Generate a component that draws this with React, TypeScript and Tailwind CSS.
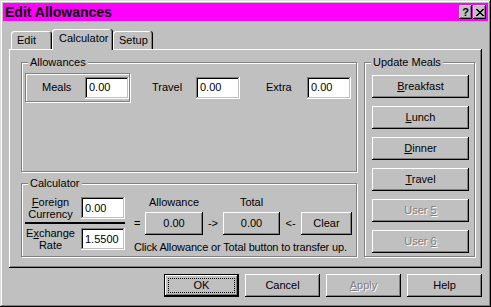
import React from "react";

const raised =
  "bg-[#c0c0c0] shadow-[inset_-1px_-1px_0_#000,inset_1px_1px_0_#fff,inset_-2px_-2px_0_#808080]";
const sunken =
  "bg-white shadow-[inset_-1px_-1px_0_#fff,inset_1px_1px_0_#808080,inset_-2px_-2px_0_#c0c0c0,inset_2px_2px_0_#000]";
const etched = "border border-[#808080] shadow-[inset_1px_1px_0_#fff,1px_1px_0_#fff]";
const disabled = "text-[#808080] [text-shadow:1px_1px_0_#fff]";

function Group({
  label,
  className,
  children,
}: {
  label: string;
  className: string;
  children?: React.ReactNode;
}) {
  return (
    <div className={`relative ${etched} ${className}`}>
      <span className="absolute left-[6px] top-[-7px] bg-[#c0c0c0] px-[2px] leading-[13px] whitespace-nowrap">
        {label}
      </span>
      {children}
    </div>
  );
}

function Field({ value, className }: { value: string; className: string }) {
  return (
    <div className={`${sunken} ${className} flex items-center pl-[4px] leading-[13px]`}>
      {value}
    </div>
  );
}

function Btn({
  children,
  className,
}: {
  children: React.ReactNode;
  className: string;
}) {
  return (
    <div className={`${raised} ${className} flex items-center justify-center leading-[13px] whitespace-nowrap`}>
      {children}
    </div>
  );
}

export default function App() {
  return (
    <div className="w-[491px] h-[307px] bg-[#c0c0c0] p-[3px] text-[11px] leading-[13px] text-black font-['Liberation_Sans',Arial,sans-serif] flex flex-col shadow-[inset_-1px_-1px_0_#000,inset_1px_1px_0_#dfdfdf,inset_-2px_-2px_0_#808080,inset_2px_2px_0_#fff]">
      {/* Title bar */}
      <div className="h-[18px] bg-[#ff00ff] flex items-center justify-between">
        <span className="pl-[2px] text-[14px] font-bold leading-[18px]">Edit Allowances</span>
        <div className="flex gap-[1px] mr-[2px]">
          <div className={`${raised} w-[13px] h-[14px] flex items-center justify-center text-[11px] font-bold leading-[11px]`}>
            ?
          </div>
          <div className={`${raised} w-[13px] h-[14px] flex items-center justify-center`}>
            <svg width="8" height="7" viewBox="0 0 8 7" shapeRendering="crispEdges">
              <rect x="0" y="0" width="2" height="1" fill="#000" />
              <rect x="6" y="0" width="2" height="1" fill="#000" />
              <rect x="1" y="1" width="2" height="1" fill="#000" />
              <rect x="5" y="1" width="2" height="1" fill="#000" />
              <rect x="2" y="2" width="4" height="1" fill="#000" />
              <rect x="3" y="3" width="2" height="1" fill="#000" />
              <rect x="2" y="4" width="4" height="1" fill="#000" />
              <rect x="1" y="5" width="2" height="1" fill="#000" />
              <rect x="5" y="5" width="2" height="1" fill="#000" />
              <rect x="0" y="6" width="2" height="1" fill="#000" />
              <rect x="6" y="6" width="2" height="1" fill="#000" />
            </svg>
          </div>
        </div>
      </div>

      <div className="mt-[8px] px-[6px] flex flex-col">
        {/* Tabs */}
        <div className="h-[20px] flex items-end pl-[2px]">
          <div className="w-[41px] h-[18px] pl-[6px] pt-[3px] bg-[#c0c0c0] rounded-t-[3px] shadow-[inset_1px_1px_0_#fff,inset_-1px_0_0_#000,inset_-2px_0_0_#808080]">
            Edit
          </div>
          <div className="relative z-10 -mb-[1px] w-[61px] h-[21px] pl-[7px] pt-[3px] bg-[#c0c0c0] rounded-t-[3px] shadow-[inset_-1px_0_0_#000,inset_1px_1px_0_#fff,inset_-2px_0_0_#808080]">
            Calculator
          </div>
          <div className="w-[40px] h-[18px] pl-[6px] pt-[3px] bg-[#c0c0c0] rounded-t-[3px] shadow-[inset_-1px_0_0_#000,inset_1px_1px_0_#fff,inset_-2px_0_0_#808080]">
            Setup
          </div>
        </div>

        {/* Panel */}
        <div className="w-[473px] h-[219px] flex gap-[7px] pl-[12px] pt-[13px] shadow-[inset_-1px_-1px_0_#000,inset_1px_1px_0_#fff,inset_-2px_-2px_0_#808080]">
          <div className="w-[336px] flex flex-col gap-[11px]">
            <Group label="Allowances" className="w-[336px] h-[110px] flex items-start pl-[3px] pt-[10px]">
              <div className="flex items-center">
                <div className={`${etched} w-[105px] h-[29px] flex items-center pl-[16px]`}>
                  <span className="w-[43px]">Meals</span>
                  <Field value="0.00" className="w-[44px] h-[22px]" />
                </div>
                <span className="ml-[22px] w-[44px]">Travel</span>
                <Field value="0.00" className="w-[44px] h-[22px]" />
                <span className="ml-[26px] w-[41px]">Extra</span>
                <Field value="0.00" className="w-[44px] h-[22px]" />
              </div>
            </Group>

            <Group label="Calculator" className="w-[336px] h-[74px] flex pl-[3px]">
              {/* left fraction block */}
              <div className="w-[100px] pt-[13px] flex flex-col">
                <div className="h-[22px] flex items-center">
                  <div className="w-[51px] text-center leading-[12px]">
                    <div>
                      <u>F</u>oreign
                    </div>
                    <div>Currency</div>
                  </div>
                  <Field value="0.00" className="ml-[5px] w-[44px] h-[22px]" />
                </div>
                <div className="mt-[3px] h-[2px] bg-black" />
                <div className="mt-[4px] h-[22px] flex items-center">
                  <div className="w-[51px] text-center leading-[12px]">
                    <div>
                      E<u>x</u>change
                    </div>
                    <div>Rate</div>
                  </div>
                  <Field value="1.5500" className="ml-[5px] w-[44px] h-[22px]" />
                </div>
              </div>

              {/* right part */}
              <div className="ml-[9px] pt-[12px] flex flex-col">
                <div className="h-[13px] flex">
                  <span className="w-[11px]" />
                  <span className="w-[58px] text-center">Allowance</span>
                  <span className="w-[20px]" />
                  <span className="w-[57px] text-center">Total</span>
                </div>
                <div className="mt-[3px] h-[23px] flex items-center">
                  <span className="w-[11px]">=</span>
                  <Btn className="w-[58px] h-[23px]">0.00</Btn>
                  <span className="w-[20px] text-center">-&gt;</span>
                  <Btn className="w-[57px] h-[23px]">0.00</Btn>
                  <span className="w-[21px] text-center">&lt;-</span>
                  <Btn className="w-[51px] h-[23px]">Clear</Btn>
                </div>
                <div className="mt-[6px] whitespace-nowrap tracking-[-0.15px]">
                  Click Allowance or Total button to transfer up.
                </div>
              </div>
            </Group>
          </div>

          <Group label="Update Meals" className="w-[111px] h-[195px] flex flex-col pl-[7px] pt-[12px] gap-[8px]">
            <Btn className="w-[97px] h-[23px]">
              <span>
                <u>B</u>reakfast
              </span>
            </Btn>
            <Btn className="w-[97px] h-[23px]">
              <span>
                <u>L</u>unch
              </span>
            </Btn>
            <Btn className="w-[97px] h-[23px]">
              <span>
                <u>D</u>inner
              </span>
            </Btn>
            <Btn className="w-[97px] h-[23px]">
              <span>
                <u>T</u>ravel
              </span>
            </Btn>
            <Btn className="w-[97px] h-[23px]">
              <span className={disabled}>
                User <u>5</u>
              </span>
            </Btn>
            <Btn className="w-[97px] h-[23px]">
              <span className={disabled}>
                User <u>6</u>
              </span>
            </Btn>
          </Group>
        </div>

        {/* Bottom buttons */}
        <div className="mt-[6px] w-[473px] flex justify-end gap-[6px]">
          <div className="w-[75px] h-[23px] border border-black p-[3px] bg-[#c0c0c0] shadow-[inset_-1px_-1px_0_#000,inset_1px_1px_0_#fff,inset_-2px_-2px_0_#808080]">
            <div className="w-full h-full border border-dotted border-black flex items-center justify-center leading-[13px]">
              OK
            </div>
          </div>
          <Btn className="w-[75px] h-[23px]">Cancel</Btn>
          <Btn className="w-[75px] h-[23px]">
            <span className={disabled}>
              <u>A</u>pply
            </span>
          </Btn>
          <Btn className="w-[75px] h-[23px]">Help</Btn>
        </div>
      </div>
    </div>
  );
}
